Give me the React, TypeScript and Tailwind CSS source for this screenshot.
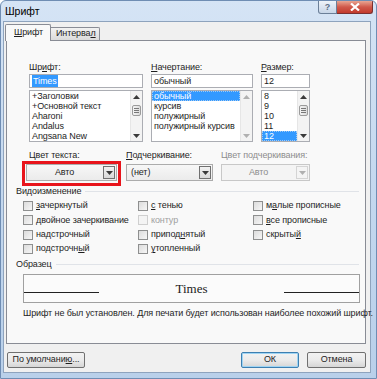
import React from 'react';

const Tri = ({ up, dim }: { up?: boolean; dim?: boolean }) => (
  <svg width="7" height="4" viewBox="0 0 7 4">
    <path d={up ? 'M0 4 L3.5 0 L7 4 Z' : 'M0 0 L3.5 4 L7 0 Z'} fill={dim ? '#b0b0b0' : '#3a3a3a'} />
  </svg>
);

function ScrollBar({ thumb, dim }: { thumb?: boolean; dim?: boolean }) {
  return (
    <div className="w-[12px] h-full flex flex-col bg-[#f3f3f3] border-l border-[#e6e6e6]">
      <div className="h-[11px] flex items-center justify-center">
        <Tri up dim={dim} />
      </div>
      <div className="flex-1 px-[1px] pt-[3px]">
        {thumb && (
          <div className="h-[11px] rounded-[2px] border border-[#9b9b9b] bg-gradient-to-r from-[#f4f4f4] to-[#dcdcdc] flex flex-col items-center justify-center gap-[1px]">
            <div className="w-[5px] h-px bg-[#777]" />
            <div className="w-[5px] h-px bg-[#777]" />
            <div className="w-[5px] h-px bg-[#777]" />
          </div>
        )}
      </div>
      <div className="h-[11px] flex items-center justify-center">
        <Tri dim={dim} />
      </div>
    </div>
  );
}

function FieldColumn({
  label,
  value,
  items,
  selected,
  width,
  thumb,
  dim,
  valueSelected,
}: {
  label: React.ReactNode;
  value: string;
  items: string[];
  selected?: number;
  width: string;
  thumb?: boolean;
  dim?: boolean;
  valueSelected?: boolean;
}) {
  return (
    <div className={`flex flex-col ${width}`}>
      <div className="h-[13px] leading-[13px] text-[#1e1e1e]">{label}</div>
      <div className="h-[14px] border border-[#abadb3] bg-white flex items-center pl-[2px] mb-[2px]">
        {valueSelected ? (
          <span className="bg-[#3399ff] text-white leading-[12px] px-[1px]">{value}</span>
        ) : (
          <span className="leading-[12px]">{value}</span>
        )}
      </div>
      <div className="h-[52px] border border-[#abadb3] bg-white flex">
        <div className="flex-1 flex flex-col overflow-hidden">
          {items.map((it, i) => (
            <div
              key={it}
              className={`h-[10px] shrink-0 leading-[10px] pl-[2px] ${
                i === selected ? 'bg-[#3399ff] text-white outline outline-1 outline-dotted outline-[#9fc9f5] -outline-offset-1' : ''
              }`}
            >
              {it}
            </div>
          ))}
        </div>
        <ScrollBar thumb={thumb} dim={dim} />
      </div>
    </div>
  );
}

function Combo({ text, center, disabled, width }: { text: string; center?: boolean; disabled?: boolean; width: string }) {
  return (
    <div
      className={`${width} h-[17px] flex border ${
        disabled ? 'border-[#c8c8c8] bg-[#f4f4f4]' : 'border-[#acacac] bg-gradient-to-b from-[#f7f7f7] to-[#ebebeb]'
      }`}
    >
      <div
        className={`flex-1 flex items-center ${center ? 'justify-center' : 'pl-[4px]'} ${
          disabled ? 'text-[#8d8d8d]' : 'text-[#1e1e1e]'
        }`}
      >
        {text}
      </div>
      <div
        className={`w-[12px] m-[1px] flex items-center justify-center border ${
          disabled ? 'border-[#d4d4d4] bg-[#f4f4f4]' : 'border-[#707070] bg-gradient-to-b from-[#f2f2f2] to-[#d8d8d8]'
        }`}
      >
        <Tri dim={disabled} />
      </div>
    </div>
  );
}

function Check({ label, disabled }: { label: React.ReactNode; disabled?: boolean }) {
  return (
    <div className="h-[14.3px] flex items-center gap-[3px]">
      <div
        className={`w-[10px] h-[10px] shrink-0 border ${
          disabled ? 'border-[#cfcfcf] bg-[#f4f4f4]' : 'border-[#8e8f8f] bg-gradient-to-br from-[#dcdcdc] to-[#f6f6f6]'
        }`}
      />
      <span className={disabled ? 'text-[#a0a0a0]' : 'text-[#1e1e1e]'}>{label}</span>
    </div>
  );
}

function GroupTitle({ children }: { children: React.ReactNode }) {
  return (
    <div className="flex items-center gap-[4px] pl-[9px] pr-[6px] h-[12px]">
      <span className="leading-[12px] text-[#1e1e1e]">{children}</span>
      <div className="flex-1 h-px bg-[#e0e3e8]" />
    </div>
  );
}

function Btn({ children, width, isDefault }: { children: React.ReactNode; width: string; isDefault?: boolean }) {
  return (
    <div
      className={`${width} h-[16px] rounded-[2px] border flex items-center justify-center bg-gradient-to-b from-[#f2f2f2] via-[#ebebeb] to-[#d6d6d6] ${
        isDefault ? 'border-[#3c7fb1] shadow-[inset_0_0_0_1px_#9fd4f3]' : 'border-[#707070]'
      }`}
    >
      {children}
    </div>
  );
}

export default function App() {
  return (
    <div className="w-[377px] h-[379px] overflow-hidden whitespace-nowrap bg-gradient-to-b from-[#d5e4f5] via-[#c4d8ef] to-[#b9d0ea] font-['Liberation_Sans',Arial,sans-serif] text-[9px] tracking-[-0.1px] text-[#1e1e1e] rounded-t-[6px] border border-[#6f8db3] flex flex-col">
      {/* Title bar */}
      <div className="h-[20px] flex items-start justify-between pr-[3px]">
        <span className="pl-[4px] pt-[4px] text-[10.5px] tracking-normal leading-[13px] text-black">Шрифт</span>
        <div className="flex">
          <div className="w-[19px] h-[13px] rounded-bl-[3px] border border-t-0 border-[#6b7f98] bg-gradient-to-b from-[#eef3f9] to-[#c7d6e8] flex items-center justify-center text-[9px] leading-none text-[#5a6d85] font-bold">
            ?
          </div>
          <div className="w-[36px] h-[13px] rounded-br-[3px] border border-t-0 border-l-0 border-[#7a3030] bg-gradient-to-b from-[#e8a593] via-[#d0584a] to-[#c23a2c] flex items-center justify-center">
            <svg width="10" height="8" viewBox="0 0 10 8">
              <path d="M1 0.5 L9 7.5 M9 0.5 L1 7.5" stroke="#fff" strokeWidth="2.2" />
            </svg>
          </div>
        </div>
      </div>

      {/* Client */}
      <div className="ml-[2px] mr-[5px] h-[352px] bg-[#f0f0f0] border border-[#8ea3bd] flex flex-col">
        {/* Tabs */}
        <div className="flex items-end pl-[1px] pt-[2px] relative z-10 -mb-px">
          <div className="w-[46px] h-[17px] bg-[#f9f9f9] border border-b-0 border-[#898c95] rounded-t-[2px] flex items-center pl-[8px] pb-[1px]">
            <span>
              <u>Ш</u>рифт
            </span>
          </div>
          <div className="w-[49px] h-[13px] mb-px bg-gradient-to-b from-[#f2f2f2] to-[#dbdbdb] border border-l-0 border-b-0 border-[#898c95] rounded-tr-[2px] flex items-center pl-[5px]">
            <span>
              Интерва<u>л</u>
            </span>
          </div>
        </div>

        {/* Panel */}
        <div className="ml-[2px] w-[360px] h-[304px] bg-[#f9f9f9] border border-[#898c95] flex flex-col">
          {/* Font fields */}
          <div className="flex gap-[8px] pl-[22px] pt-[20px]">
            <FieldColumn
              width="w-[114px]"
              label={
                <>
                  Шр<u>и</u>фт:
                </>
              }
              value="Times"
              valueSelected
              items={['+Заголовки', '+Основной текст', 'Aharoni', 'Andalus', 'Angsana New']}
              thumb
            />
            <FieldColumn
              width="w-[102px]"
              label={
                <>
                  <u>Н</u>ачертание:
                </>
              }
              value="обычный"
              items={['обычный', 'курсив', 'полужирный', 'полужирный курсив']}
              selected={0}
              dim
            />
            <FieldColumn
              width="w-[49px]"
              label={
                <>
                  <u>Р</u>азмер:
                </>
              }
              value="12"
              items={['8', '9', '10', '11', '12']}
              selected={4}
              thumb
            />
          </div>

          {/* Colour / underline row */}
          <div className="flex items-start pl-[15px] pt-[7px]">
            <div className="flex flex-col w-[99px]">
              <div className="h-[12px] leading-[12px] pl-[7px]">Цвет текста:</div>
              <div className="border-[3px] border-[#e8141b] px-[1px] pb-[2px]">
                <Combo width="w-full" text="Авто" center />
              </div>
            </div>
            <div className="flex flex-col w-[87px] ml-[5px]">
              <div className="h-[12px] leading-[12px]">
                <u>П</u>одчеркивание:
              </div>
              <div className="pt-[3px]">
                <Combo width="w-[87px]" text="(нет)" />
              </div>
            </div>
            <div className="flex flex-col w-[89px] ml-[8px]">
              <div className="h-[12px] leading-[12px] text-[#8d8d8d]">Цвет подчеркивания:</div>
              <div className="pt-[3px]">
                <Combo width="w-[89px]" text="Авто" center disabled />
              </div>
            </div>
          </div>

          {/* Effects */}
          <div className="mt-[-1px]">
            <GroupTitle>Видоизменение</GroupTitle>
          </div>
          <div className="grid grid-cols-[115px_115px_1fr] pl-[16px] pt-[2px]">
            <div className="flex flex-col">
              <Check label={<><u>з</u>ачеркнутый</>} />
              <Check label="двойное зачеркивание" />
              <Check label={<>на<u>д</u>строчный</>} />
              <Check label={<>подстрочн<u>ы</u>й</>} />
            </div>
            <div className="flex flex-col">
              <Check label={<><u>с</u> тенью</>} />
              <Check label="контур" disabled />
              <Check label={<>припод<u>н</u>ятый</>} />
              <Check label={<><u>у</u>топленный</>} />
            </div>
            <div className="flex flex-col">
              <Check label={<>м<u>а</u>лые прописные</>} />
              <Check label={<><u>в</u>се прописные</>} />
              <Check label={<>скрыты<u>й</u></>} />
            </div>
          </div>

          {/* Sample */}
          <div className="mt-[2px]">
            <GroupTitle>Образец</GroupTitle>
          </div>
          <div className="ml-[16px] mt-[4px] w-[337px] h-[29px] border border-[#a0a0a0] bg-[#fbfbfb] flex items-end justify-between">
            <div className="w-[75px] h-px bg-[#222] mb-[9px]" />
            <span className="font-['Liberation_Serif',serif] text-[13px] tracking-normal leading-[16px] text-[#222] mb-[5px]">Times</span>
            <div className="w-[75px] h-px bg-[#222] mb-[9px]" />
          </div>
          <div className="pl-[16px] pt-[4px] leading-[12px]">
            Шрифт не был установлен. Для печати будет использован наиболее похожий шрифт.
          </div>
        </div>

        {/* Buttons */}
        <div className="flex items-center pt-[8px] pl-[3px] pr-[4px]">
          <Btn width="w-[78px]">
            <span>
              По умолчани<u>ю</u>...
            </span>
          </Btn>
          <div className="flex-1" />
          <Btn width="w-[58px]" isDefault>
            ОК
          </Btn>
          <div className="w-[8px]" />
          <Btn width="w-[59px]">Отмена</Btn>
        </div>
      </div>
    </div>
  );
}
